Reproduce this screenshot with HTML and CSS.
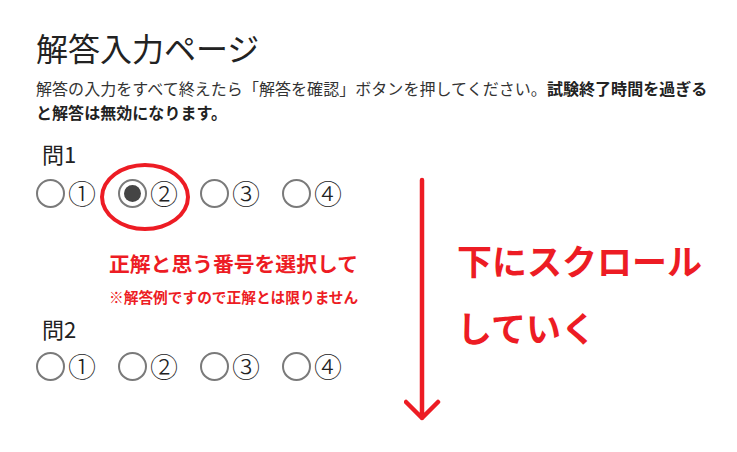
FILE: index.html
```html
<!DOCTYPE html>
<html lang="ja">
<head>
<meta charset="utf-8">
<title>解答入力ページ</title>
<link rel="stylesheet" href="styles.css">
</head>
<body>
<main class="page">
  <h1 class="title">解答入力ページ</h1>
  <p class="lead">解答の入力をすべて終えたら「解答を確認」ボタンを押してください。<strong>試験終了時間を過ぎる</strong><br><strong>と解答は無効になります。</strong></p>

  <section class="question">
    <h2 class="q-label">問1</h2>
    <div class="options">
      <label class="option"><span class="radio"></span><span class="num">①</span></label>
      <label class="option"><span class="radio checked"></span><span class="num">②</span></label>
      <label class="option"><span class="radio"></span><span class="num">③</span></label>
      <label class="option"><span class="radio"></span><span class="num">④</span></label>
    </div>
  </section>

  <div class="note">
    <p class="note-main">正解と思う番号を選択して</p>
    <p class="note-sub">※解答例ですので正解とは限りません</p>
  </div>

  <section class="question q2">
    <h2 class="q-label">問2</h2>
    <div class="options">
      <label class="option"><span class="radio"></span><span class="num">①</span></label>
      <label class="option"><span class="radio"></span><span class="num">②</span></label>
      <label class="option"><span class="radio"></span><span class="num">③</span></label>
      <label class="option"><span class="radio"></span><span class="num">④</span></label>
    </div>
  </section>

  <span class="highlight"></span>

  <div class="scroll-hint">
    <svg class="arrow" width="40" height="250" viewBox="0 0 40 250">
      <path d="M18 4 V242 M2 226 L18 242 L34 226" fill="none" stroke="#ed1c24" stroke-width="4.5" stroke-linecap="round" stroke-linejoin="round"/>
    </svg>
    <p class="scroll-text">下にスクロール<br>していく</p>
  </div>
</main>
</body>
</html>
```

FILE: styles.css
```css
html, body {
  margin: 0;
  padding: 0;
  background: #ffffff;
}

body {
  font-family: "Noto Sans CJK JP", "Noto Sans", sans-serif;
  color: #333333;
}

.page {
  position: relative;
  width: 737px;
  height: 452px;
  box-sizing: border-box;
  padding: 27px 0 0 36px;
  overflow: hidden;
}

.title {
  margin: 0;
  font-size: 32px;
  line-height: 40px;
  font-weight: 400;
  color: #222222;
}

.lead {
  margin: 9px 0 0;
  font-size: 16px;
  line-height: 24px;
  letter-spacing: 0.05px;
  color: #333333;
}

.lead strong {
  color: #222222;
  font-weight: 700;
}

.question {
  margin-top: 14px;
}

.q-label {
  margin: 0;
  padding-left: 6px;
  font-size: 22px;
  line-height: 30px;
  font-weight: 400;
  color: #222222;
}

.options {
  display: flex;
  gap: 22px;
  margin-top: 10px;
  height: 30px;
  align-items: center;
}

.option {
  display: flex;
  align-items: center;
  gap: 3px;
}

.radio {
  display: flex;
  align-items: center;
  justify-content: center;
  width: 29px;
  height: 29px;
  box-sizing: border-box;
  border: 2px solid #7a7a7a;
  border-radius: 50%;
  background: #ffffff;
}

.radio.checked::after {
  content: "";
  width: 17px;
  height: 17px;
  border-radius: 50%;
  background: #454545;
}

.num {
  font-size: 28px;
  line-height: 30px;
  width: 28px;
  text-align: center;
  font-weight: 300;
  color: #222222;
}

.note {
  margin: 40px 0 0 73px;
  color: #ed1c24;
  font-weight: 700;
}

.note p {
  margin: 0;
}

.note-main {
  font-size: 20.8px;
  line-height: 30px;
}

.note-sub {
  margin-top: 9px !important;
  font-size: 14.7px;
  line-height: 20px;
}

.q2 {
  margin-top: 6px;
}

.q2 .options {
  margin-top: 8px;
}

.highlight {
  position: absolute;
  left: 100px;
  top: 163px;
  width: 90px;
  height: 68px;
  box-sizing: border-box;
  border: 4px solid #ed1c24;
  border-radius: 50%;
}

.scroll-hint {
  position: absolute;
  left: 404px;
  top: 176px;
  display: flex;
  align-items: flex-start;
}

.arrow {
  display: block;
}

.scroll-text {
  margin: 50px 0 0 13px;
  font-size: 35px;
  line-height: 67px;
  font-weight: 700;
  color: #ed1c24;
  white-space: nowrap;
}
```
